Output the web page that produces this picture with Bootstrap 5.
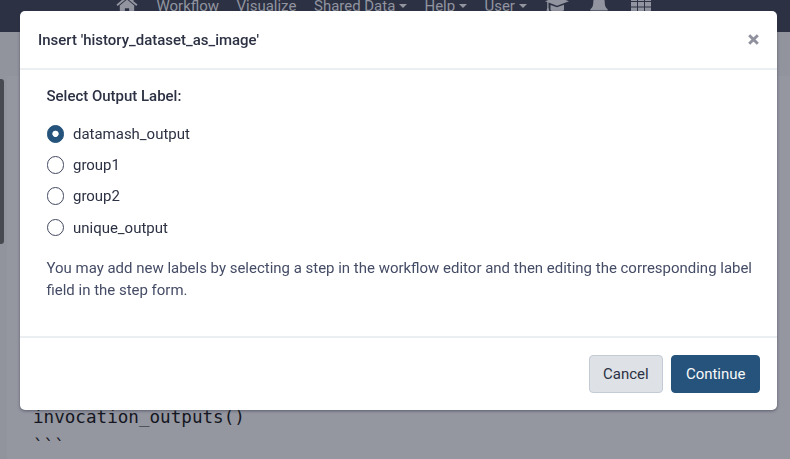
<!DOCTYPE html>
<html lang="en">
<head>
<meta charset="utf-8">
<title>Workflow report editor</title>
<link href="https://cdn.jsdelivr.net/npm/bootstrap@5.3.0/dist/css/bootstrap.min.css" rel="stylesheet">
<style>
  body { font-family: Roboto, sans-serif; font-size: 14.98px; line-height: 22px; color: #2c3143; background: #91939d; height: 459px; overflow: hidden; }
  .masthead { height: 52px; margin-top: -20px; padding: 0 0 0 116px; background: #2c3143; color: #9295a0; flex-wrap: nowrap; justify-content: flex-start; }
  .masthead .nav-link { padding: 0; color: inherit; line-height: 22px; white-space: nowrap; }
  .masthead svg { display: block; fill: currentColor; margin-bottom: 2px; }
  .masthead .dropdown-toggle::after { margin-left: 4px; border-top-width: 4px; border-left-width: 4px; border-right-width: 4px; vertical-align: 3px; }
  .slot-home { width: 40.5px; } .slot-workflow { width: 80px; } .slot-visualize { width: 77.5px; }
  .slot-shared { width: 110.5px; } .slot-help { width: 60px; } .slot-user { width: 60.5px; }
  .slot-learn { width: 45px; } .slot-bell { width: 41px; }
  .workspace { height: 427px; padding-top: 44px; }
  .gutter { width: 7px; }
  .scroll-thumb { width: 4px; height: 165px; margin-top: 3px; background: #484a52; border-radius: 0 3px 3px 0; }
  .editor { background: #9496a0; padding: 0 0 0 26px; }
  .editor pre { font-family: "DejaVu Sans Mono", monospace; font-size: 17.6px; line-height: 29px; margin: 0 0 -2px; color: #14161f; }
  .modal-dialog { width: 757px; max-width: none; margin: 11px 0 0 20px; }
  .modal-content { height: 399px; border: 0; border-radius: 5px; color: #2c3143; box-shadow: 0 1px 3px rgba(44,49,67,.55); }
  .modal-header { height: 59px; padding: 0 18px; border-bottom: 2px solid #ebeff2; }
  .modal-title { font-size: 14.98px; line-height: 22px; font-weight: 500; }
  .dismiss { border: 0; padding: 0; background: none; line-height: 0; }
  .modal-body { padding: 15px 20px 0 26.5px; }
  .caption { font-weight: 500; margin-bottom: 16px; }
  .form-check { min-height: 0; height: 22px; margin: 0 0 9.2px; padding-left: 26.5px; }
  .form-check .form-check-input { width: 17.6px; height: 17.6px; margin: 2px 0 0 -26.5px; border: 1px solid #41475f; }
  .form-check-input:checked { background-color: #25537b; border-color: #25537b; background-image: radial-gradient(circle, #fff 2.8px, transparent 3.5px); }
  .form-check-label { display: block; }
  .hint { color: #454c66; margin: 18px 0 0; }
  .modal-footer { height: 74px; padding: 0 17px; border-top: 2px solid #ebeff2; gap: 8.5px; }
  .modal-footer .btn { font-size: 14.98px; line-height: 22px; height: 38px; padding: 7px 13px; border-radius: 4px; margin: 0; }
  .btn-cancel { width: 74px; background: #dee1e6; border-color: #c3cbd6; color: #2c3143; }
  .btn-continue { width: 88.6px; background: #25537b; border-color: #25537b; color: #f8f9fa; }
</style>
</head>
<body>
<nav class="navbar masthead">
  <div class="slot-home"><svg width="22" height="20" viewBox="0 0 22 20"><path d="M11 4.5 3.8 10.6V18.2h5.1v-5h4.2v5h5.1v-7.6z"/><path d="M.5 9.5 11 .8l3.5 2.9V1.3h3v5l4 3.2-1.2 1.5L11 3.4 1.7 11z"/></svg></div>
  <a class="nav-link slot-workflow">Workflow</a>
  <a class="nav-link slot-visualize">Visualize</a>
  <a class="nav-link dropdown-toggle slot-shared">Shared Data</a>
  <a class="nav-link dropdown-toggle slot-help">Help</a>
  <a class="nav-link dropdown-toggle slot-user">User</a>
  <div class="slot-learn"><svg width="24" height="20" viewBox="0 0 24 20"><path d="M12 2 24 6.200 12 10.800 3.500 7.600v5l1.200 5.200H1.200l1-5.200V7L0 6.200z"/><path d="m5.500 10 6.500 2.300 7-2.500v5.400c-3.500 2-10.500 2-13.500 0z"/></svg></div>
  <div class="slot-bell"><svg width="18" height="20" viewBox="0 0 18 20"><path d="M8 0h2v1.200c3 .6 4.700 2.600 4.700 5.700 0 4 .9 5.700 3 7.300v1.300H.3v-1.300c2.100-1.600 3-3.300 3-7.300C3.300 3.800 5 1.800 8 1.200z"/></svg></div>
  <div><svg width="20" height="18" viewBox="0 0 20 18"><path d="M0 0h6v5H0zM7 0h6v5H7zM14 0h6v5h-6zM0 6h6v4.500H0zM7 6h6v4.500H7zM14 6h6v4.500h-6zM0 11.500h6v5H0zM7 11.500h6v5H7zM14 11.500h6v5h-6z"/></svg></div>
</nav>
<main class="workspace d-flex">
  <div class="gutter"><div class="scroll-thumb"></div></div>
  <div class="editor flex-grow-1 d-flex flex-column justify-content-end"><pre class="overflow-hidden">invocation_outputs()
```</pre></div>
</main>
<div class="modal d-block overflow-hidden" tabindex="-1" role="dialog">
  <div class="modal-dialog">
    <div class="modal-content">
      <div class="modal-header">
        <h5 class="modal-title">Insert 'history_dataset_as_image'</h5>
        <button class="dismiss" type="button" aria-label="Close"><svg width="11" height="11" viewBox="0 0 11 11" fill="none" stroke="#8f919e" stroke-width="2.9"><path d="m1.200 1.200 8.600 8.600m0-8.600L1.200 9.800"/></svg></button>
      </div>
      <div class="modal-body">
        <div class="caption">Select Output Label:</div>
        <div class="form-check"><input class="form-check-input" type="radio" name="label" id="l1" checked><label class="form-check-label" for="l1">datamash_output</label></div>
        <div class="form-check"><input class="form-check-input" type="radio" name="label" id="l2"><label class="form-check-label" for="l2">group1</label></div>
        <div class="form-check"><input class="form-check-input" type="radio" name="label" id="l3"><label class="form-check-label" for="l3">group2</label></div>
        <div class="form-check"><input class="form-check-input" type="radio" name="label" id="l4"><label class="form-check-label" for="l4">unique_output</label></div>
        <p class="hint">You may add new labels by selecting a step in the workflow editor and then editing the corresponding label field in the step form.</p>
      </div>
      <div class="modal-footer">
        <button type="button" class="btn btn-cancel">Cancel</button>
        <button type="button" class="btn btn-continue">Continue</button>
      </div>
    </div>
  </div>
</div>
<script src="https://cdn.jsdelivr.net/npm/bootstrap@5.3.0/dist/js/bootstrap.bundle.min.js"></script>
</body>
</html>
